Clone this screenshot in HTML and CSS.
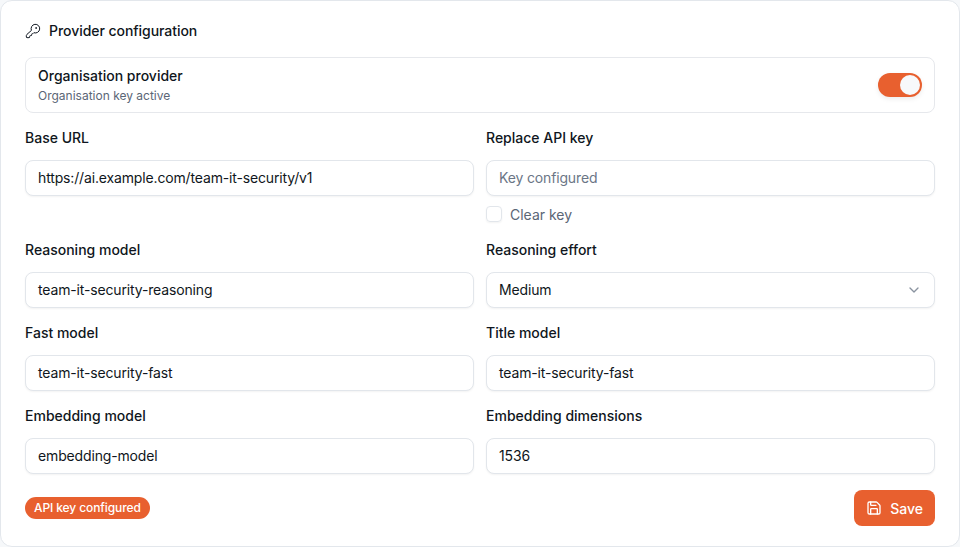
FILE: index.html
```html
<!DOCTYPE html>
<html lang="en">
<head>
  <meta charset="UTF-8">
  <meta name="viewport" content="width=device-width, initial-scale=1.0">
  <title>Provider configuration</title>
  <link rel="stylesheet" href="styles.css">
</head>
<body>
  <div class="card">
    <!-- Header -->
    <div class="card-title">
      <svg class="key-icon" viewBox="0 0 24 24" fill="none" stroke="currentColor" stroke-width="1.5" stroke-linecap="round" stroke-linejoin="round">
        <path d="M2.586 17.414A2 2 0 0 0 2 18.828V21a1 1 0 0 0 1 1h3a1 1 0 0 0 1-1v-1a1 1 0 0 1 1-1h1a1 1 0 0 0 1-1v-1a1 1 0 0 1 1-1h.172a2 2 0 0 0 1.414-.586l.814-.814a6.5 6.5 0 1 0-4-4z"/>
        <circle cx="16.5" cy="7.5" r=".5" fill="currentColor"/>
      </svg>
      <span>Provider configuration</span>
    </div>

    <!-- Provider toggle -->
    <div class="provider-box">
      <div>
        <div class="provider-name">Organisation provider</div>
        <div class="provider-status">Organisation key active</div>
      </div>
      <div class="toggle"><div class="toggle-knob"></div></div>
    </div>

    <!-- Form fields -->
    <div class="form-grid">
      <div class="field">
        <label>Base URL</label>
        <div class="input">https://ai.example.com/team-it-security/v1</div>
      </div>
      <div class="field">
        <label>Replace API key</label>
        <div class="input placeholder">Key configured</div>
        <div class="check-row">
          <span class="checkbox"></span>
          <span>Clear key</span>
        </div>
      </div>
      <div class="field">
        <label>Reasoning model</label>
        <div class="input">team-it-security-reasoning</div>
      </div>
      <div class="field">
        <label>Reasoning effort</label>
        <div class="input select">
          <span>Medium</span>
          <svg class="chevron" viewBox="0 0 24 24" fill="none" stroke="currentColor" stroke-width="2" stroke-linecap="round" stroke-linejoin="round"><path d="m6 9 6 6 6-6"/></svg>
        </div>
      </div>
      <div class="field">
        <label>Fast model</label>
        <div class="input">team-it-security-fast</div>
      </div>
      <div class="field">
        <label>Title model</label>
        <div class="input">team-it-security-fast</div>
      </div>
      <div class="field">
        <label>Embedding model</label>
        <div class="input">embedding-model</div>
      </div>
      <div class="field">
        <label>Embedding dimensions</label>
        <div class="input">1536</div>
      </div>
    </div>

    <!-- Footer -->
    <div class="card-footer">
      <span class="badge">API key configured</span>
      <button class="save-btn">
        <svg class="save-icon" viewBox="0 0 24 24" fill="none" stroke="currentColor" stroke-width="2" stroke-linecap="round" stroke-linejoin="round">
          <path d="M15.2 3a2 2 0 0 1 1.4.6l3.8 3.8a2 2 0 0 1 .6 1.4V19a2 2 0 0 1-2 2H5a2 2 0 0 1-2-2V5a2 2 0 0 1 2-2z"/>
          <path d="M17 21v-7a1 1 0 0 0-1-1H8a1 1 0 0 0-1 1v7"/>
          <path d="M7 3v4a1 1 0 0 0 1 1h7"/>
        </svg>
        Save
      </button>
    </div>
  </div>
</body>
</html>
```

FILE: styles.css
```css
/* General Styling */
body {
  font-family: Inter, "Liberation Sans", sans-serif;
  margin: 0;
  background-color: #f6f8fa;
  color: #0f1620;
}

.card {
  width: 960px;
  height: 547px;
  box-sizing: border-box;
  padding: 20px 24px;
  background-color: #ffffff;
  border: 1px solid #e3e7ec;
  border-radius: 12px;
}

/* Header */
.card-title {
  display: flex;
  align-items: center;
  gap: 8px;
  height: 20px;
  margin-bottom: 16px;
  font-size: 14px;
  font-weight: 550;
  letter-spacing: -0.05px;
}

.card-title span {
  padding-bottom: 2px;
}

.key-icon {
  width: 16px;
  height: 16px;
}

/* Provider toggle */
.provider-box {
  display: flex;
  align-items: center;
  justify-content: space-between;
  height: 56px;
  box-sizing: border-box;
  padding: 0 12px;
  margin-bottom: 12px;
  border: 1px solid #e6e8ec;
  border-radius: 8px;
}

.provider-name {
  font-size: 14px;
  font-weight: 550;
  line-height: 20px;
}

.provider-status {
  margin-top: 2px;
  font-size: 12px;
  line-height: 16px;
  color: #5b6676;
}

.toggle {
  display: flex;
  justify-content: flex-end;
  align-items: center;
  width: 44px;
  height: 24px;
  box-sizing: border-box;
  padding: 2px;
  background-color: #e8602f;
  border-radius: 12px;
  box-shadow: 0 2px 5px rgba(0, 0, 0, 0.08);
}

.toggle-knob {
  width: 20px;
  height: 20px;
  background-color: #f7f9fb;
  border-radius: 50%;
}

/* Form */
.form-grid {
  display: grid;
  grid-template-columns: 1fr 1fr;
  gap: 12px;
}

.field label {
  display: block;
  margin-bottom: 10px;
  font-size: 14px;
  font-weight: 550;
  line-height: 25px;
}

.input {
  display: flex;
  align-items: center;
  height: 36px;
  box-sizing: border-box;
  padding: 0 12px 1px;
  font-size: 14px;
  letter-spacing: -0.15px;
  background-color: #ffffff;
  border: 1px solid #e2e6eb;
  border-radius: 8px;
  box-shadow: 0 1px 2px rgba(0, 0, 0, 0.05);
}

.placeholder {
  color: #6b7686;
}

.select {
  justify-content: space-between;
}

.chevron {
  width: 16px;
  height: 16px;
  color: #8a93a0;
}

.check-row {
  display: flex;
  align-items: center;
  gap: 8px;
  height: 20px;
  margin: 8px 0 1px;
  font-size: 14px;
  color: #5b6676;
}

.checkbox {
  width: 16px;
  height: 16px;
  box-sizing: border-box;
  border: 1px solid #e2e6eb;
  border-radius: 4px;
  box-shadow: 0 1px 2px rgba(0, 0, 0, 0.05);
}

/* Footer */
.card-footer {
  display: flex;
  align-items: center;
  justify-content: space-between;
  margin-top: 16px;
}

.badge {
  padding: 0 9px;
  font-size: 12px;
  font-weight: 500;
  letter-spacing: -0.1px;
  line-height: 22px;
  color: #ffffff;
  background-color: #e8602f;
  border-radius: 11px;
}

.save-btn {
  display: flex;
  align-items: center;
  gap: 8px;
  height: 36px;
  padding: 0 12px;
  font-family: inherit;
  font-size: 14px;
  font-weight: 550;
  color: #ffffff;
  background-color: #e8602f;
  border: none;
  border-radius: 8px;
}

.save-icon {
  width: 16px;
  height: 16px;
}
```
